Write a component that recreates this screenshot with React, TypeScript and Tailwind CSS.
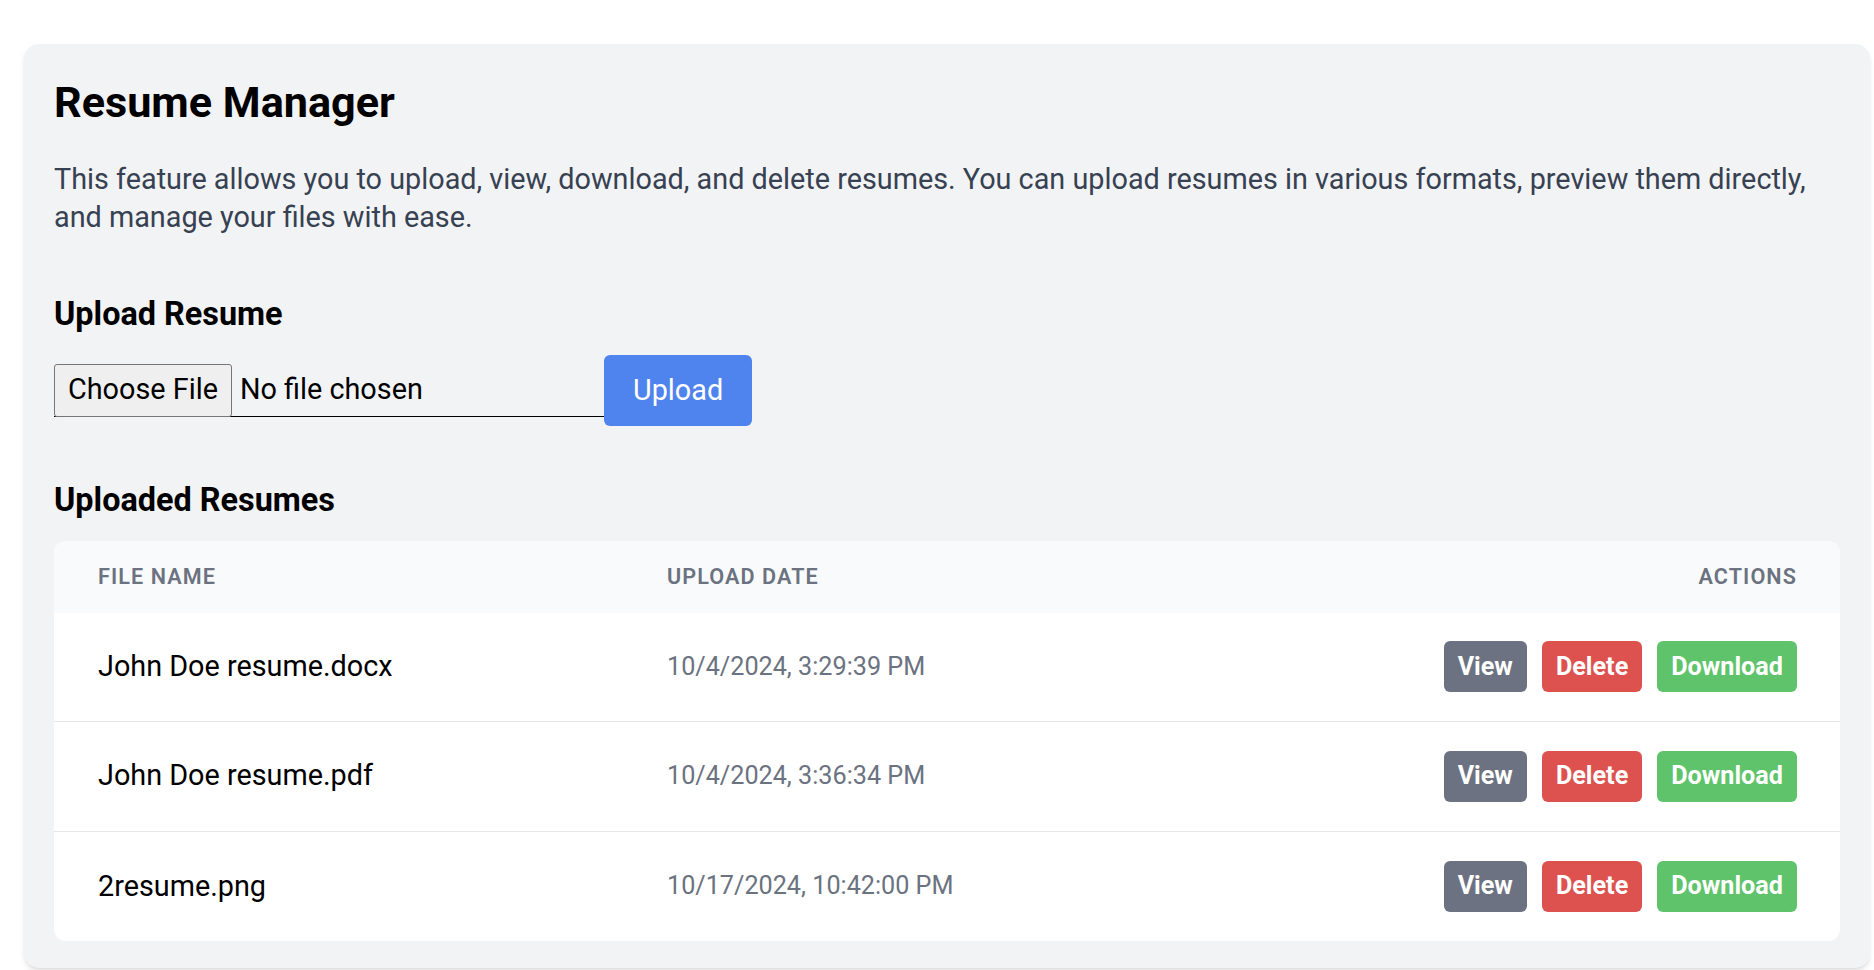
const resumes = [
  { name: 'John Doe resume.docx', date: '10/4/2024, 3:29:39 PM' },
  { name: 'John Doe resume.pdf', date: '10/4/2024, 3:36:34 PM' },
  { name: '2resume.png', date: '10/17/2024, 10:42:00 PM' },
]

function ActionButton({ label, color }: { label: string; color: string }) {
  return (
    <button className={`h-[51px] rounded-[6px] px-[14px] text-[25.2px] font-bold text-white ${color}`}>
      {label}
    </button>
  )
}

export default function App() {
  return (
    <div className="min-h-screen bg-white pt-[44px] pl-[24px] pr-[4px] font-['Roboto',sans-serif]">
      <div className="rounded-[15px] bg-[#f2f3f5] px-[30px] pt-[30px] pb-[27px] shadow-md">
        <h1 className="text-[43.2px] leading-[57px] font-bold text-black">Resume Manager</h1>
        <p className="mt-[29px] text-[28.8px] leading-[38px] text-[#374151]">
          This feature allows you to upload, view, download, and delete resumes. You can upload resumes in various
          formats, preview them directly, and manage your files with ease.
        </p>

        <h2 className="mt-[53px] text-[32.4px] leading-[50px] font-bold text-black">Upload Resume</h2>
        <div className="mt-[16px] flex items-center">
          <label className="flex h-[53px] w-[550px] cursor-pointer items-center border-b border-black text-[28.8px] text-black">
            <input type="file" className="hidden" />
            <span className="flex h-[53px] items-center rounded-[3px] border border-[#767676] bg-[#efefef] px-[13px]">
              Choose File
            </span>
            <span className="ml-[8px]">No file chosen</span>
          </label>
          <button className="h-[71px] rounded-[6px] bg-[#4f83ee] px-[29px] text-[28.8px] text-white">Upload</button>
        </div>

        <h2 className="mt-[49px] text-[32.4px] leading-[50px] font-bold text-black">Uploaded Resumes</h2>
        <div className="mt-[16px] overflow-hidden rounded-[12px] bg-white">
          <table className="w-full table-fixed">
            <colgroup>
              <col className="w-[569px]" />
              <col className="w-[775px]" />
              <col />
            </colgroup>
            <thead className="bg-[#f9fafb]">
              <tr className="text-[21.6px] tracking-[0.05em] text-[#6b7280] uppercase">
                <th className="h-[72px] pl-[44px] text-left font-semibold">File Name</th>
                <th className="h-[72px] pl-[44px] text-left font-semibold">Upload Date</th>
                <th className="h-[72px] pr-[43px] text-right font-semibold">Actions</th>
              </tr>
            </thead>
            <tbody className="divide-y divide-[#e5e7eb]">
              {resumes.map((r, i) => (
                <tr key={r.name} className={i === 0 ? 'h-[108px]' : 'h-[110px]'}>
                  <td className="pl-[44px] text-[28.8px] text-black">{r.name}</td>
                  <td className="pl-[44px] text-[25.2px] text-[#6b7280]">{r.date}</td>
                  <td className="pr-[43px]">
                    <div className="flex justify-end gap-[15px]">
                      <ActionButton label="View" color="bg-[#6c7281]" />
                      <ActionButton label="Delete" color="bg-[#dd524f]" />
                      <ActionButton label="Download" color="bg-[#5ec36a]" />
                    </div>
                  </td>
                </tr>
              ))}
            </tbody>
          </table>
        </div>
      </div>
    </div>
  )
}
